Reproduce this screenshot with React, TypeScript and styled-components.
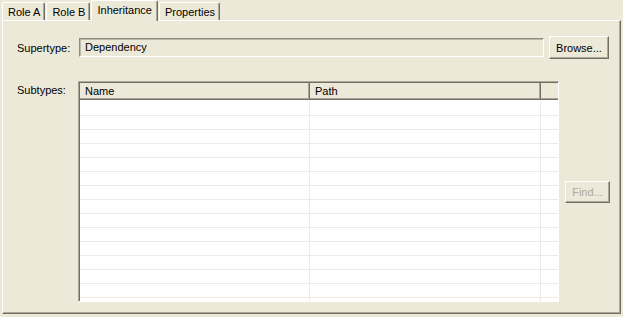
import styled, { createGlobalStyle } from 'styled-components';

const GlobalStyle = createGlobalStyle`
  html, body {
    margin: 0;
    padding: 0;
    background: #ece9d8;
  }
  body {
    font-family: 'Liberation Sans', Arial, sans-serif;
    font-size: 11px;
    color: #000;
  }
`;

const tabs = ['Role A', 'Role B', 'Inheritance', 'Properties'];
const rowCount = 15;

export default function App() {
  return (
    <>
      <GlobalStyle />
      <Window>
        <TabBar>
          {tabs.map((tab) => (
            <Tab key={tab} $selected={tab === 'Inheritance'}>
              {tab}
            </Tab>
          ))}
        </TabBar>
        <Panel>
          <FieldRow>
            <Label>Supertype:</Label>
            <TextField>Dependency</TextField>
            <Button>Browse...</Button>
          </FieldRow>
          <TableRow>
            <TopLabel>Subtypes:</TopLabel>
            <Table>
              <HeaderRow>
                <HeaderCell>Name</HeaderCell>
                <HeaderCell>Path</HeaderCell>
                <HeaderCell $last />
              </HeaderRow>
              <Body>
                {Array.from({ length: rowCount }).map((_, i) => (
                  <BodyRow key={i}>
                    <BodyCell />
                    <BodyCell />
                    <BodyCell $last />
                  </BodyRow>
                ))}
              </Body>
            </Table>
            <SideColumn>
              <Button $disabled $small>
                Find...
              </Button>
            </SideColumn>
          </TableRow>
        </Panel>
      </Window>
    </>
  );
}

const Window = styled.div`
  width: 623px;
  height: 317px;
  box-sizing: border-box;
  padding: 0 2px 3px 2px;
  display: flex;
  flex-direction: column;
`;

const TabBar = styled.div`
  display: flex;
  height: 20px;
  flex-shrink: 0;
  align-items: flex-start;
  position: relative;
  z-index: 1;
`;

const Tab = styled.div<{ $selected?: boolean }>`
  box-sizing: border-box;
  height: ${(p) => (p.$selected ? '21px' : '18px')};
  margin-top: ${(p) => (p.$selected ? '0' : '2px')};
  padding: ${(p) => (p.$selected ? '2px 5px 0 5px' : '2px 4px 0 5px')};
  background: #ece9d8;
  border-top: 1px solid #fff;
  border-left: 1px solid #fff;
  border-right: 1px solid #716f64;
  box-shadow: inset -1px 0 0 #aca899;
  border-radius: 2px 2px 0 0;
  line-height: 14px;
  white-space: nowrap;
  margin-right: 1px;
`;

const Panel = styled.div`
  flex: 1;
  min-height: 0;
  overflow: hidden;
  box-sizing: border-box;
  border-top: 1px solid #fff;
  border-left: 1px solid #fff;
  border-right: 1px solid #716f64;
  border-bottom: 1px solid #716f64;
  box-shadow: inset -1px -1px 0 #aca899;
  padding: 15px 11px 11px 14px;
  display: flex;
  flex-direction: column;
  gap: 22px;
`;

const FieldRow = styled.div`
  display: flex;
  align-items: center;
  height: 23px;
  flex-shrink: 0;
`;

const Label = styled.div`
  width: 62px;
  flex-shrink: 0;
`;

const TopLabel = styled(Label)`
  width: 61px;
  padding-top: 3px;
`;

const TextField = styled.div`
  flex: 1;
  height: 19px;
  box-sizing: border-box;
  border-top: 1px solid #8d8b80;
  border-left: 1px solid #8d8b80;
  border-right: 1px solid #fff;
  border-bottom: 1px solid #fff;
  box-shadow: inset 1px 1px 0 #bcb9a8;
  padding: 0 5px;
  line-height: 17px;
  margin-right: 5px;
`;

const Button = styled.div<{ $disabled?: boolean; $small?: boolean }>`
  box-sizing: border-box;
  width: ${(p) => (p.$small ? '45px' : '60px')};
  height: ${(p) => (p.$small ? '22px' : '23px')};
  flex-shrink: 0;
  border-top: 1px solid #fff;
  border-left: 1px solid #fff;
  border-right: 1px solid #716f64;
  border-bottom: 1px solid #716f64;
  box-shadow: inset -1px -1px 0 #aca899;
  display: flex;
  align-items: center;
  justify-content: center;
  color: ${(p) => (p.$disabled ? '#aca899' : '#000')};
`;

const TableRow = styled.div`
  flex: 1;
  display: flex;
  min-height: 0;
`;

const Table = styled.div`
  width: 481px;
  flex-shrink: 0;
  box-sizing: border-box;
  background: #fff;
  border-top: 1px solid #aca899;
  border-left: 1px solid #aca899;
  border-right: 1px solid #fff;
  border-bottom: 1px solid #fff;
  box-shadow: inset 1px 1px 0 #716f64;
  padding: 1px 0 0 1px;
  display: flex;
  flex-direction: column;
  overflow: hidden;
`;

const HeaderRow = styled.div`
  display: grid;
  grid-template-columns: 230px 231px 1fr;
  height: 17px;
  flex-shrink: 0;
  box-sizing: border-box;
  background: #ece9d8;
  border-bottom: 1px solid #716f64;
  box-shadow: inset 0 -1px 0 #aca899;
`;

const HeaderCell = styled.div<{ $last?: boolean }>`
  box-sizing: border-box;
  padding: 1px 5px 0 5px;
  line-height: 14px;
  border-right: ${(p) => (p.$last ? 'none' : '1px solid #716f64')};
  box-shadow: ${(p) => (p.$last ? 'none' : 'inset -1px 0 0 #aca899')};
`;

const Body = styled.div`
  flex: 1;
  min-height: 0;
  overflow: hidden;
  padding-top: 1px;
`;

const BodyRow = styled.div`
  display: grid;
  grid-template-columns: 230px 231px 1fr;
  height: 14px;
  box-sizing: border-box;
  border-bottom: 1px solid #ecebe6;
  &:first-child {
    height: 15px;
  }
`;

const BodyCell = styled.div<{ $last?: boolean }>`
  border-right: ${(p) => (p.$last ? 'none' : '1px solid #ecebe6')};
`;

const SideColumn = styled.div`
  flex: 1;
  display: flex;
  align-items: center;
  justify-content: flex-end;
  margin-right: -1px;
`;
